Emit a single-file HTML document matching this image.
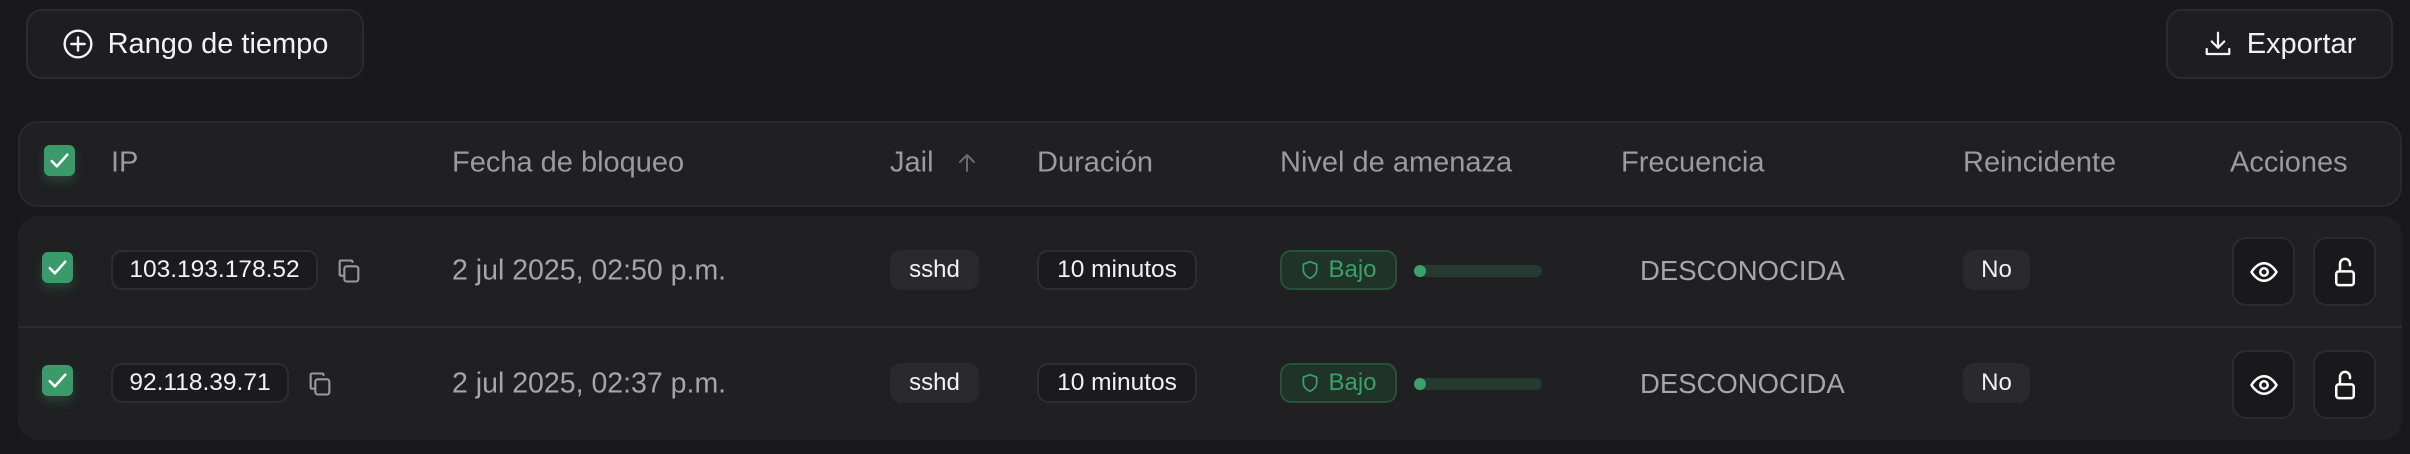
<!DOCTYPE html>
<html><head><meta charset="utf-8"><style>
*{box-sizing:border-box;margin:0;padding:0}
body{width:2410px;height:454px;background:#19191b;font-family:"Liberation Sans",sans-serif;position:relative;overflow:hidden;color:#fff}
.a{position:absolute}
.btn{position:absolute;border:2px solid #2c2c2f;border-radius:16px;background:#1e1e20;display:flex;align-items:center;justify-content:center;font-size:29px;color:#f2f2f2;gap:14px}
.card{position:absolute;background:#202022;border:2px solid #2a2a2d;border-radius:20px}
.h{position:absolute;top:163px;transform:translateY(-50%);font-size:29px;color:#9a9aa0}
.cb{position:absolute;width:31px;height:31px;background:#3a9a6a;border-radius:6px;box-shadow:0 6px 10px rgba(58,154,106,.25)}
.pill{position:absolute;height:40px;border:2px solid #2e2e31;border-radius:11px;background:#1b1b1d;font-size:24.5px;color:#f2f2f2;display:flex;align-items:center;justify-content:center}
.t{position:absolute;font-size:28.5px;color:#a5a5aa;transform:translateY(-50%)}
.no{position:absolute;height:40px;width:67px;border-radius:11px;background:#2a2a2c;font-size:24px;color:#f2f2f2;display:flex;align-items:center;justify-content:center}
.bajo{position:absolute;height:40px;width:117px;border:2px solid #24523c;border-radius:11px;background:#1f3329;color:#3aa06c;font-size:24px;display:flex;align-items:center;justify-content:center;gap:8px}
.bar{position:absolute;width:128px;height:12px;border-radius:6px;background:#263a31}
.bar i{position:absolute;left:0;top:0;width:12px;height:12px;border-radius:6px;background:#3aa06c}
.ib{position:absolute;width:63px;height:69px;border:2px solid #2c2c2f;border-radius:14px;background:#19191b;display:flex;align-items:center;justify-content:center}
</style></head><body>
<div class="btn" style="left:26px;top:9px;width:338px;height:70px">
<svg width="32" height="32" viewBox="0 0 24 24" fill="none" stroke="#f2f2f2" stroke-width="1.8" stroke-linecap="round"><circle cx="12" cy="12" r="10"/><path d="M12 7v10M7 12h10"/></svg>Rango de tiempo</div>
<div class="btn" style="left:2166px;top:9px;width:227px;height:70px">
<svg width="30" height="30" viewBox="0 0 24 24" fill="none" stroke="#f2f2f2" stroke-width="1.8" stroke-linecap="round" stroke-linejoin="round"><path d="M12 3v12M7 10l5 5 5-5M3 16v4h18v-4"/></svg>Exportar</div>

<div class="card" style="left:18px;top:121px;width:2384px;height:86px"></div>
<div class="cb" style="left:44px;top:145px"><svg width="31" height="31" viewBox="0 0 24 24" fill="none" stroke="#fff" stroke-width="2" stroke-linecap="round" stroke-linejoin="round"><path d="M6 12.5l4 4 8-9"/></svg></div>
<div class="h" style="left:111px">IP</div>
<div class="h" style="left:452px">Fecha de bloqueo</div>
<div class="h" style="left:890px">Jail</div>
<svg class="a" style="left:955px;top:151px" width="24" height="24" viewBox="0 0 24 24" fill="none" stroke="#6a6a70" stroke-width="2" stroke-linecap="round" stroke-linejoin="round"><path d="M12 20V4M5 11l7-7 7 7"/></svg>
<div class="h" style="left:1037px">Duración</div>
<div class="h" style="left:1280px">Nivel de amenaza</div>
<div class="h" style="left:1621px">Frecuencia</div>
<div class="h" style="left:1963px">Reincidente</div>
<div class="h" style="left:2230px">Acciones</div>

<div class="card" style="left:18px;top:216px;width:2384px;height:224px;border:none"></div>
<div class="a" style="left:18px;top:326px;width:2384px;height:2px;background:#2c2c2f"></div>

<!-- row 1 -->
<div class="cb" style="left:42px;top:252px"><svg width="31" height="31" viewBox="0 0 24 24" fill="none" stroke="#fff" stroke-width="2" stroke-linecap="round" stroke-linejoin="round"><path d="M6 12.5l4 4 8-9"/></svg></div>
<div class="pill" style="left:111px;top:250px;width:207px">103.193.178.52</div>
<svg class="a" style="left:335px;top:257px" width="28" height="28" viewBox="0 0 24 24" fill="none" stroke="#9a9aa0" stroke-width="1.8" stroke-linejoin="round"><rect x="8" y="8" width="12" height="13" rx="2"/><path d="M15 5V4a1 1 0 0 0-1-1H5a1 1 0 0 0-1 1v11a1 1 0 0 0 1 1h3"/></svg>
<div class="t" style="left:452px;top:271px">2 jul 2025, 02:50 p.m.</div>
<div class="no" style="left:890px;top:250px;width:89px">sshd</div>
<div class="pill" style="left:1037px;top:250px;width:160px">10 minutos</div>
<div class="bajo" style="left:1280px;top:250px"><svg width="20" height="22" viewBox="0 0 24 24" fill="none" stroke="#3aa06c" stroke-width="2" stroke-linejoin="round"><path d="M12 2l8 3v7c0 5-4 8-8 10-4-2-8-5-8-10V5z"/></svg>Bajo</div>
<div class="bar" style="left:1414px;top:265px"><i></i></div>
<div class="t" style="left:1640px;top:271px;font-size:27.5px">DESCONOCIDA</div>
<div class="no" style="left:1963px;top:250px">No</div>
<div class="ib" style="left:2232px;top:237px"><svg width="30" height="30" viewBox="0 0 24 24" fill="none" stroke="#fff" stroke-width="2"><path d="M2 12s4-7 10-7 10 7 10 7-4 7-10 7S2 12 2 12z"/><circle cx="12" cy="12" r="3"/></svg></div>
<div class="ib" style="left:2313px;top:237px"><svg width="30" height="34" viewBox="0 0 24 27" fill="none" stroke="#fff" stroke-width="2" stroke-linecap="round" stroke-linejoin="round"><rect x="5" y="13" width="14" height="11" rx="2"/><path d="M8 13V7a4 4 0 0 1 8 0v1"/></svg></div>

<!-- row 2 -->
<div class="cb" style="left:42px;top:365px"><svg width="31" height="31" viewBox="0 0 24 24" fill="none" stroke="#fff" stroke-width="2" stroke-linecap="round" stroke-linejoin="round"><path d="M6 12.5l4 4 8-9"/></svg></div>
<div class="pill" style="left:111px;top:363px;width:178px">92.118.39.71</div>
<svg class="a" style="left:306px;top:370px" width="28" height="28" viewBox="0 0 24 24" fill="none" stroke="#9a9aa0" stroke-width="1.8" stroke-linejoin="round"><rect x="8" y="8" width="12" height="13" rx="2"/><path d="M15 5V4a1 1 0 0 0-1-1H5a1 1 0 0 0-1 1v11a1 1 0 0 0 1 1h3"/></svg>
<div class="t" style="left:452px;top:384px">2 jul 2025, 02:37 p.m.</div>
<div class="no" style="left:890px;top:363px;width:89px">sshd</div>
<div class="pill" style="left:1037px;top:363px;width:160px">10 minutos</div>
<div class="bajo" style="left:1280px;top:363px"><svg width="20" height="22" viewBox="0 0 24 24" fill="none" stroke="#3aa06c" stroke-width="2" stroke-linejoin="round"><path d="M12 2l8 3v7c0 5-4 8-8 10-4-2-8-5-8-10V5z"/></svg>Bajo</div>
<div class="bar" style="left:1414px;top:378px"><i></i></div>
<div class="t" style="left:1640px;top:384px;font-size:27.5px">DESCONOCIDA</div>
<div class="no" style="left:1963px;top:363px">No</div>
<div class="ib" style="left:2232px;top:350px"><svg width="30" height="30" viewBox="0 0 24 24" fill="none" stroke="#fff" stroke-width="2"><path d="M2 12s4-7 10-7 10 7 10 7-4 7-10 7S2 12 2 12z"/><circle cx="12" cy="12" r="3"/></svg></div>
<div class="ib" style="left:2313px;top:350px"><svg width="30" height="34" viewBox="0 0 24 27" fill="none" stroke="#fff" stroke-width="2" stroke-linecap="round" stroke-linejoin="round"><rect x="5" y="13" width="14" height="11" rx="2"/><path d="M8 13V7a4 4 0 0 1 8 0v1"/></svg></div>
</body></html>
